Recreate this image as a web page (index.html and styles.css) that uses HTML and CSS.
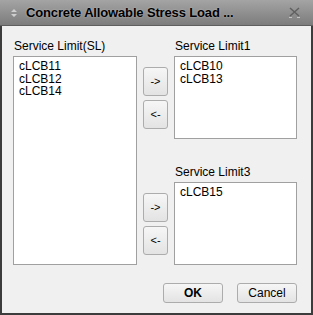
FILE: index.html
```html
<!DOCTYPE html>
<html lang="en">
<head>
	<meta charset="UTF-8">
	<title>Concrete Allowable Stress Load</title>
	<link rel="stylesheet" href="styles.css">
</head>
<body>
	<div class="window">
		<header class="titlebar">
			<svg class="grip" width="8" height="10" viewBox="0 0 8 10">
				<path d="M1 4 L4 1 L7 4 Z M1 6 L4 9 L7 6 Z" fill="#d0d0d0"/>
			</svg>
			<span class="title">Concrete Allowable Stress Load ...</span>
			<svg class="close" width="11" height="11" viewBox="0 0 11 11">
				<path d="M1 1 L10 9 M10 1 L1 9" stroke="#606060" stroke-width="1.5"/>
				<path d="M0 10.5 L3 10.5 M8 10.5 L11 10.5" stroke="#c4c4c4" stroke-width="1"/>
			</svg>
		</header>
		<div class="content">
			<div class="panes">
				<div class="field left">
					<label>Service Limit(SL)</label>
					<ul class="list">
						<li>cLCB11</li>
						<li>cLCB12</li>
						<li>cLCB14</li>
					</ul>
				</div>
				<div class="right">
					<div class="group">
						<div class="arrows">
							<a href="javascript:;" class="btn arrow">-&gt;</a>
							<a href="javascript:;" class="btn arrow">&lt;-</a>
						</div>
						<div class="field">
							<label>Service Limit1</label>
							<ul class="list">
								<li>cLCB10</li>
								<li>cLCB13</li>
							</ul>
						</div>
					</div>
					<div class="group">
						<div class="arrows">
							<a href="javascript:;" class="btn arrow">-&gt;</a>
							<a href="javascript:;" class="btn arrow">&lt;-</a>
						</div>
						<div class="field">
							<label>Service Limit3</label>
							<ul class="list">
								<li>cLCB15</li>
							</ul>
						</div>
					</div>
				</div>
			</div>
			<div class="actions">
				<a href="javascript:;" class="btn ok">OK</a>
				<a href="javascript:;" class="btn">Cancel</a>
			</div>
		</div>
	</div>
</body>
</html>
```

FILE: styles.css
```css
a{
	text-decoration: none;
	color: #000;
}
body{
	margin: 0;
	font-family: "Liberation Sans", Arial, sans-serif;
	font-size: 12px;
}
.window{
	width: 313px;
	height: 315px;
	box-sizing: border-box;
	border: 2px solid #3c3c3c;
	border-top: none;
	background-color: #f0f0f0;
	display: flex;
	flex-direction: column;
}
	.titlebar{
		height: 26px;
		margin: 0 -2px;
		background: linear-gradient(#a4a4a4, #7c7c7c);
		border-bottom: 1px solid #5e5e5e;
		box-sizing: border-box;
		display: flex;
		align-items: center;
		padding: 0 10px 0 10px;
	}
	.grip{
		margin-right: 8px;
	}
	.title{
		flex: 1;
		font-weight: bold;
		font-size: 13px;
		letter-spacing: -0.15px;
		color: #000;
		text-shadow: 0 0 2px rgba(255,255,255,0.45);
	}
	.close{
		margin-right: 3px;
	}
	.content{
		flex: 1;
		padding: 13px 14px 0 11px;
		display: flex;
		flex-direction: column;
	}
	.panes{
		display: flex;
		gap: 6px;
	}
	.field{
		display: flex;
		flex-direction: column;
	}
	.field label{
		line-height: 15px;
		height: 15px;
		padding-left: 1px;
		color: #000;
	}
	.list{
		list-style: none;
		margin: 2px 0 0;
		padding: 3px 5px;
		background-color: #fff;
		border: 1px solid #a0a0a0;
		box-sizing: border-box;
		line-height: 12.5px;
	}
	.left{
		width: 124px;
	}
	.left .list{
		height: 209px;
	}
	.right{
		display: flex;
		flex-direction: column;
		gap: 26px;
	}
	.group{
		display: flex;
		gap: 6px;
	}
	.group .list{
		width: 123px;
		height: 83px;
	}
	.arrows{
		display: flex;
		flex-direction: column;
		justify-content: center;
		gap: 4px;
		padding-top: 17px;
	}
	.btn{
		display: block;
		box-sizing: border-box;
		border: 1px solid #acacac;
		border-radius: 3px;
		background: linear-gradient(#f6f6f6, #e3e3e3);
		text-align: center;
	}
	.arrow{
		width: 25px;
		height: 29px;
		line-height: 27px;
		font-size: 11px;
	}
	.actions{
		display: flex;
		justify-content: flex-end;
		gap: 14px;
		margin-top: 18px;
	}
	.actions .btn{
		width: 60px;
		height: 20px;
		line-height: 18px;
	}
	.ok{
		font-weight: bold;
	}
```
